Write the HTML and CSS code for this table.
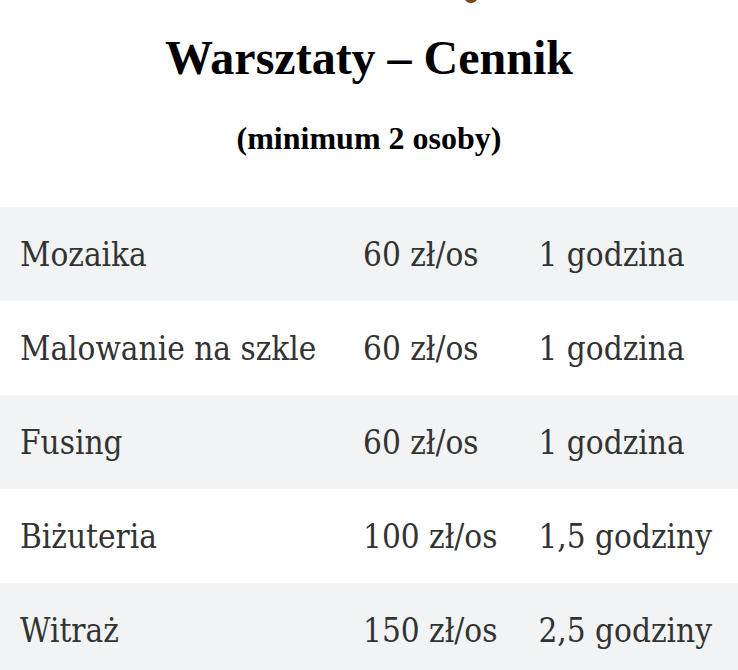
FILE: index.html
```html
<!DOCTYPE html>
<html lang="pl">
<head>
<meta charset="utf-8">
<link rel="stylesheet" href="styles.css">
</head>
<body>
<div class="logo-tail"></div>
<h1 class="title">Warsztaty – Cennik</h1>
<p class="subtitle">(minimum 2 osoby)</p>
<table class="prices">
  <tbody>
    <tr><td>Mozaika</td><td>60 zł/os</td><td>1 godzina</td></tr>
    <tr><td>Malowanie na szkle</td><td>60 zł/os</td><td>1 godzina</td></tr>
    <tr><td>Fusing</td><td>60 zł/os</td><td>1 godzina</td></tr>
    <tr><td>Biżuteria</td><td>100 zł/os</td><td>1,5 godziny</td></tr>
    <tr><td>Witraż</td><td>150 zł/os</td><td>2,5 godziny</td></tr>
  </tbody>
</table>
</body>
</html>
```
FILE: styles.css
```css
html, body {
  margin: 0;
  padding: 0;
  background: #fff;
}
body {
  position: relative;
  font-family: "Liberation Serif", serif;
  color: #000;
}
.logo-tail {
  position: absolute;
  left: 465px;
  top: -6px;
  width: 12px;
  height: 9px;
  border-radius: 50%;
  background: #7a4a17;
}
.title {
  margin: 0;
  padding-top: 30px;
  text-align: center;
  font-size: 48px;
  font-weight: bold;
  line-height: 56px;
}
.subtitle {
  margin: 0;
  padding-top: 34px;
  text-align: center;
  font-size: 32px;
  font-weight: bold;
  line-height: 36px;
}
.prices {
  margin-top: 51px;
  width: 100%;
  border-collapse: collapse;
  font-family: "DejaVu Serif Condensed", "DejaVu Serif", serif;
  font-size: 33px;
  color: #333;
}
.prices td {
  height: 94px;
  padding: 0 21px 0 23px;
  white-space: nowrap;
}
.prices td:first-child {
  width: 100%;
  padding-left: 20px;
}
.prices td:last-child {
  padding: 0 26px 0 20px;
}
.prices tr:nth-child(odd) {
  background: #f2f3f4;
}
```
